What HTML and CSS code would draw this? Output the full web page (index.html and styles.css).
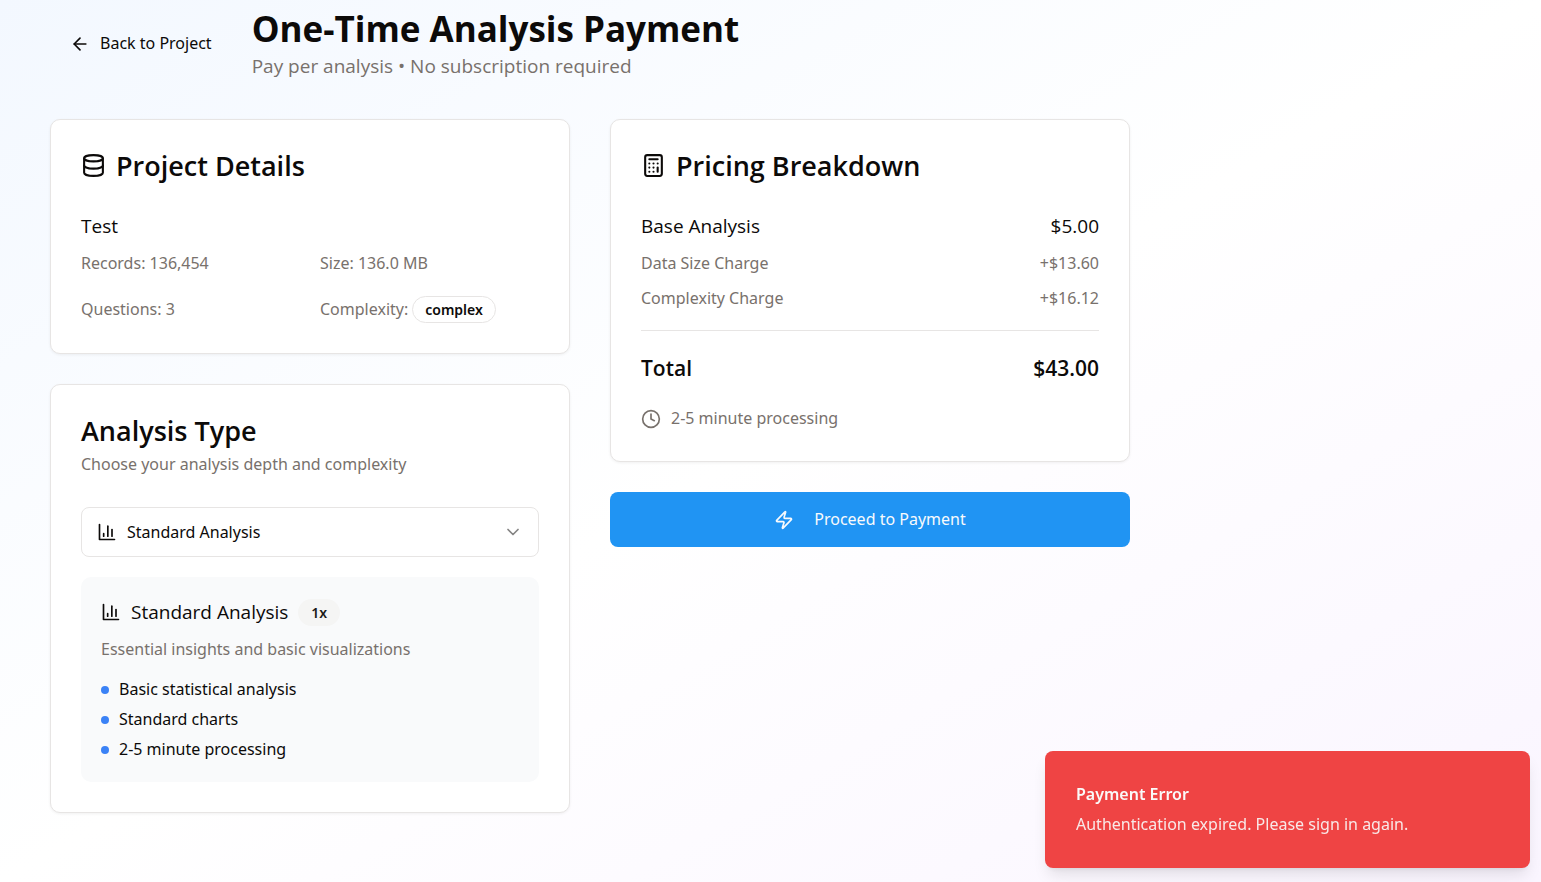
FILE: index.html
```html
<!DOCTYPE html>
<html lang="en">
<head>
<meta charset="utf-8">
<meta name="viewport" content="width=device-width, initial-scale=1">
<title>One-Time Analysis Payment</title>
<link rel="stylesheet" href="styles.css">
</head>
<body>
<div class="page">
  <header class="page-header">
    <button type="button" class="back-button">
      <svg class="icon" viewBox="0 0 24 24" aria-hidden="true"><path d="m12 19-7-7 7-7"/><path d="M19 12H5"/></svg>
      Back to Project
    </button>
    <div>
      <h1 class="page-title">One-Time Analysis Payment</h1>
      <p class="page-subtitle">Pay per analysis • No subscription required</p>
    </div>
  </header>

  <main class="columns">
    <div class="column">
      <section class="card">
        <h2 class="card-title">
          <svg class="icon icon-lg" viewBox="0 0 24 24" aria-hidden="true"><ellipse cx="12" cy="5" rx="9" ry="3"/><path d="M3 5V19A9 3 0 0 0 21 19V5"/><path d="M3 12A9 3 0 0 0 21 12"/></svg>
          Project Details
        </h2>
        <div class="project">
          <h3 class="item-title">Test</h3>
          <div class="facts">
            <div>Records: 136,454</div>
            <div>Size: 136.0 MB</div>
            <div>Questions: 3</div>
            <div class="fact-badge">Complexity: <span class="badge badge-outline">complex</span></div>
          </div>
        </div>
      </section>

      <section class="card">
        <div class="card-heading">
          <h2 class="card-title" id="type-title">Analysis Type</h2>
          <p class="muted">Choose your analysis depth and complexity</p>
        </div>
        <div class="type-body">
          <div class="select-wrap">
            <svg class="icon" viewBox="0 0 24 24" aria-hidden="true"><path d="M3 3v18h18"/><path d="M18 17V9"/><path d="M13 17V5"/><path d="M8 17v-3"/></svg>
            <select class="select" aria-labelledby="type-title">
              <option>Standard Analysis</option>
            </select>
            <svg class="icon chevron" viewBox="0 0 24 24" aria-hidden="true"><path d="m6 9 6 6 6-6"/></svg>
          </div>
          <div class="summary">
            <div class="summary-title">
              <svg class="icon" viewBox="0 0 24 24" aria-hidden="true"><path d="M3 3v18h18"/><path d="M18 17V9"/><path d="M13 17V5"/><path d="M8 17v-3"/></svg>
              <h3 class="item-title">Standard Analysis</h3>
              <span class="badge badge-soft">1x</span>
            </div>
            <p class="muted">Essential insights and basic visualizations</p>
            <ul class="features">
              <li>Basic statistical analysis</li>
              <li>Standard charts</li>
              <li>2-5 minute processing</li>
            </ul>
          </div>
        </div>
      </section>
    </div>

    <div class="column">
      <section class="card">
        <h2 class="card-title">
          <svg class="icon icon-lg" viewBox="0 0 24 24" aria-hidden="true"><rect width="16" height="20" x="4" y="2" rx="2"/><path d="M8 6h8"/><path d="M16 14v4"/><path d="M16 10h.01"/><path d="M12 10h.01"/><path d="M8 10h.01"/><path d="M12 14h.01"/><path d="M8 14h.01"/><path d="M12 18h.01"/><path d="M8 18h.01"/></svg>
          Pricing Breakdown
        </h2>
        <dl class="prices">
          <div class="price item-title"><dt>Base Analysis</dt><dd>$5.00</dd></div>
          <div class="price muted"><dt>Data Size Charge</dt><dd>+$13.60</dd></div>
          <div class="price muted"><dt>Complexity Charge</dt><dd>+$16.12</dd></div>
          <div class="price total"><dt>Total</dt><dd>$43.00</dd></div>
        </dl>
        <p class="timing muted">
          <svg class="icon" viewBox="0 0 24 24" aria-hidden="true"><circle cx="12" cy="12" r="10"/><path d="M12 6v6l4 2"/></svg>
          2-5 minute processing
        </p>
      </section>
      <button type="button" class="pay-button">
        <svg class="icon" viewBox="0 0 24 24" aria-hidden="true"><path d="M4 14a1 1 0 0 1-.78-1.63l9.9-10.2a.5.5 0 0 1 .86.46l-1.92 6.02A1 1 0 0 0 13 10h7a1 1 0 0 1 .78 1.63l-9.9 10.2a.5.5 0 0 1-.86-.46l1.92-6.02A1 1 0 0 0 11 14z"/></svg>
        Proceed to Payment
      </button>
    </div>
  </main>
</div>

<div class="toast" role="alert">
  <div class="toast-title">Payment Error</div>
  <div class="toast-text">Authentication expired. Please sign in again.</div>
</div>
</body>
</html>
```
FILE: styles.css
```css
*,
*::before {
  box-sizing: border-box;
}

body,
h1,
h2,
h3,
p,
ul,
dl,
dd {
  margin: 0;
}

body {
  font-family: "Segoe UI", "Noto Sans", sans-serif;
  font-size: 16px;
  line-height: 25px;
  color: #0c0a09;
}

button,
select {
  font: inherit;
  color: inherit;
  cursor: pointer;
}

.page {
  min-height: 100vh;
  padding: 6px 50px 50px;
  background: linear-gradient(to bottom right, #f3f8ff, #ffffff 50%, #faf5ff);
}

.icon {
  width: 20px;
  height: 20px;
  flex: none;
  fill: none;
  stroke: currentColor;
  stroke-width: 2;
  stroke-linecap: round;
  stroke-linejoin: round;
}

.icon-lg {
  width: 25px;
  height: 25px;
}

.muted {
  color: #78716c;
}

.page-header {
  display: flex;
  align-items: center;
  gap: 20px;
  margin-bottom: 38px;
}

.back-button {
  display: flex;
  align-items: center;
  gap: 10px;
  padding: 10px 20px;
  border: 0;
  border-radius: 8px;
  background: transparent;
}

.page-title,
.page-subtitle,
.card-title,
.item-title,
.total {
  font-family: "Segoe UI", "Open Sans", sans-serif;
}

.page-title {
  font-size: 35px;
  line-height: 45px;
  font-weight: 700;
}

.page-subtitle {
  font-size: 19px;
  line-height: 30px;
  color: #78716c;
}

.columns {
  display: grid;
  grid-template-columns: repeat(2, minmax(0, 1fr));
  align-items: start;
  gap: 40px;
  max-width: 1080px;
}

.column {
  display: grid;
  gap: 30px;
}

.card {
  display: grid;
  gap: 30px;
  padding: 30px;
  border: 1px solid #e7e5e4;
  border-radius: 10px;
  background: #ffffff;
  box-shadow: 0 1px 3px rgba(0, 0, 0, 0.06);
}

.card-title {
  display: flex;
  align-items: center;
  gap: 10px;
  font-size: 27px;
  line-height: 31px;
  font-weight: 600;
}

.card-heading {
  display: grid;
  gap: 6px;
}

.item-title {
  font-size: 19px;
  line-height: 30px;
  font-weight: 400;
}

.project,
.prices {
  display: grid;
  gap: 10px;
}

.facts {
  display: grid;
  grid-template-columns: 1fr 1fr;
  align-items: center;
  gap: 20px;
  color: #78716c;
}

.fact-badge {
  display: flex;
  align-items: center;
  gap: 4px;
}

.badge {
  padding: 3px 12px;
  border: 1px solid transparent;
  border-radius: 14px;
  font-size: 14px;
  line-height: 19px;
  font-weight: 600;
}

.badge-outline {
  border-color: #e7e5e4;
  color: #0c0a09;
}

.badge-soft {
  background: #f5f5f4;
  color: #1c1917;
}

.type-body {
  display: grid;
  gap: 20px;
}

.select-wrap {
  display: grid;
  grid-template-columns: 46px 1fr 35px;
  align-items: center;
  border: 1px solid #e7e5e4;
  border-radius: 8px;
}

.select-wrap .icon {
  grid-row: 1;
  grid-column: 1;
  margin-left: 15px;
  z-index: 1;
  pointer-events: none;
}

.select-wrap .chevron {
  grid-column: 3;
  margin-left: 0;
  opacity: 0.5;
}

.select {
  grid-row: 1;
  grid-column: 1 / -1;
  height: 48px;
  padding: 0 36px 0 45px;
  border: 0;
  border-radius: 8px;
  background: transparent;
  appearance: none;
}

.summary {
  padding: 20px;
  border-radius: 10px;
  background: #f9fafb;
}

.summary-title {
  display: flex;
  align-items: center;
  gap: 10px;
  margin-bottom: 10px;
}

.features {
  display: grid;
  gap: 5px;
  margin-top: 15px;
  padding: 0;
  list-style: none;
}

.features li {
  display: flex;
  align-items: center;
  gap: 10px;
}

.features li::before {
  content: "";
  width: 8px;
  height: 8px;
  border-radius: 50%;
  background: #3b82f6;
}

.price {
  display: flex;
  justify-content: space-between;
}

.total {
  margin-top: 9px;
  padding-top: 20px;
  border-top: 1px solid #e7e5e4;
  font-size: 21px;
  line-height: 35px;
  font-weight: 600;
}

.timing {
  display: flex;
  align-items: center;
  gap: 10px;
  margin-top: -10px;
}

.pay-button {
  display: flex;
  align-items: center;
  justify-content: center;
  gap: 20px;
  padding: 15px 40px;
  border: 0;
  border-radius: 8px;
  background: #2094f3;
  color: #f8fafc;
}

.toast {
  position: fixed;
  right: 11px;
  bottom: 14px;
  width: 485px;
  max-width: calc(100vw - 22px);
  padding: 31px;
  border-radius: 8px;
  background: #ef4444;
  color: #fafaf9;
  box-shadow: 0 10px 15px -3px rgba(0, 0, 0, 0.1), 0 4px 6px -4px rgba(0, 0, 0, 0.1);
}

.toast-title {
  margin-bottom: 5px;
  font-weight: 600;
}

.toast-text {
  opacity: 0.9;
}
```
